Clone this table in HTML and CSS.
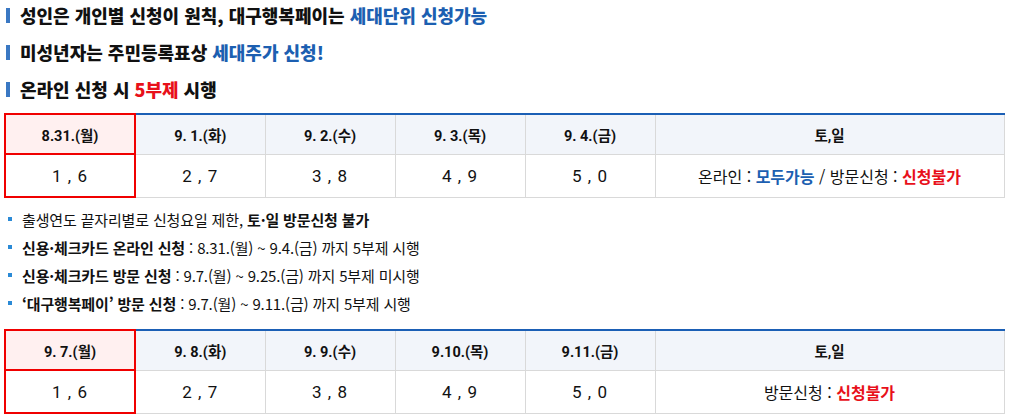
FILE: index.html
```html
<!DOCTYPE html>
<html lang="ko">
<head>
<meta charset="utf-8">
<link rel="stylesheet" href="styles.css">
</head>
<body>
<div class="page">
  <h2 class="head"><span class="bar"></span><span>성인은 개인별 신청이 원칙, 대구행복페이는 <em class="blue">세대단위 신청가능</em></span></h2>
  <h2 class="head"><span class="bar"></span><span>미성년자는 주민등록표상 <em class="blue">세대주가 신청!</em></span></h2>
  <h2 class="head"><span class="bar"></span><span>온라인 신청 시 <em class="red">5부제</em> 시행</span></h2>

  <table class="sched t1">
    <colgroup><col class="c"><col class="c"><col class="c"><col class="c"><col class="c"><col class="w"></colgroup>
    <tr class="hr">
      <th class="first">8.31.(월)</th><th>9. 1.(화)</th><th>9. 2.(수)</th><th>9. 3.(목)</th><th>9. 4.(금)</th><th>토,일</th>
    </tr>
    <tr class="br">
      <td class="first">1 , 6</td><td>2 , 7</td><td>3 , 8</td><td>4 , 9</td><td>5 , 0</td>
      <td class="note">온라인 : <b class="blue">모두가능</b> / 방문신청 : <b class="red">신청불가</b></td>
    </tr>
  </table>

  <ul class="list">
    <li><span>출생연도 끝자리별로 신청요일 제한, <b>토·일 방문신청 불가</b></span></li>
    <li><span><b>신용·체크카드 온라인 신청</b> : 8.31.(월) ~ 9.4.(금) 까지 5부제 시행</span></li>
    <li><span><b>신용·체크카드 방문 신청</b> : 9.7.(월) ~ 9.25.(금) 까지 5부제 미시행</span></li>
    <li><span><b>‘대구행복페이’ 방문 신청</b> : 9.7.(월) ~ 9.11.(금) 까지 5부제 시행</span></li>
  </ul>

  <table class="sched t2">
    <colgroup><col class="c"><col class="c"><col class="c"><col class="c"><col class="c"><col class="w"></colgroup>
    <tr class="hr">
      <th class="first">9. 7.(월)</th><th>9. 8.(화)</th><th>9. 9.(수)</th><th>9.10.(목)</th><th>9.11.(금)</th><th>토,일</th>
    </tr>
    <tr class="br">
      <td class="first">1 , 6</td><td>2 , 7</td><td>3 , 8</td><td>4 , 9</td><td>5 , 0</td>
      <td class="note">방문신청 : <b class="red">신청불가</b></td>
    </tr>
  </table>
</div>
</body>
</html>
```

FILE: styles.css
```css
* { box-sizing: border-box; }
html, body { margin: 0; padding: 0; background: #fff; }
body {
  font-family: Roboto, "Noto Sans CJK KR", "Noto Sans", sans-serif;
  color: #111;
}
.page {
  width: 1009px;
  height: 415px;
  overflow: hidden;
  padding: 0 6px 0 4px;
  display: flex;
  flex-direction: column;
}
.head {
  margin: 0 0 7px 0;
  height: 30px;
  display: flex;
  align-items: center;
  gap: 10px;
  font-size: 18px;
  font-weight: 900;
  font-family: "Noto Sans CJK KR", sans-serif;
  color: #111;
  padding-left: 2px;
}
.head em { font-style: normal; }
.bar {
  display: block;
  width: 4px;
  height: 15px;
  background: #3a78c3;
}
.blue { color: #1c5fb1; }
.red { color: #e8101a; }
.head:nth-of-type(3) { margin-bottom: 9px; }

.sched {
  width: 999px;
  border-collapse: collapse;
  table-layout: fixed;
  font-family: Roboto, "Noto Sans CJK KR", sans-serif;
  text-align: center;
  flex: none;
}
.sched col.c { width: 130px; }
.sched col.w { width: 349px; }
.sched th, .sched td {
  border: 1px solid #d9d9d9;
  padding: 0;
}
.sched .hr th {
  height: 40px;
  background: #f2f5fa;
  font-size: 14.5px;
  font-weight: 700;
  border-top: 2px solid #1b5fb5;
}
.sched .br td {
  height: 43px;
  font-size: 17px;
  font-weight: 400;
  background: #fff;
  letter-spacing: 1px;
}
.sched .br td.note {
  font-size: 16px;
  letter-spacing: 0;
  font-family: "Noto Sans CJK KR", Roboto, sans-serif;
}
.sched .br td.note b { font-weight: 700; }
.sched th.first {
  background: #fff0f0;
  border: 2px solid #f00000;
}
.sched td.first {
  border: 2px solid #f00000;
}

.list {
  list-style: none;
  margin: 7px 0 12px 0;
  padding: 0;
  font-family: "Noto Sans CJK KR", Roboto, sans-serif;
  font-size: 15px;
  color: #111;
}
.list li {
  height: 28px;
  display: flex;
  align-items: center;
  gap: 10px;
  padding-left: 4px;
  letter-spacing: -0.15px;
  white-space: pre;
}
.list li::before {
  content: "";
  width: 4px;
  height: 4px;
  background: #2b8ad6;
  flex: none;
}
.list b { font-weight: 700; }
```
